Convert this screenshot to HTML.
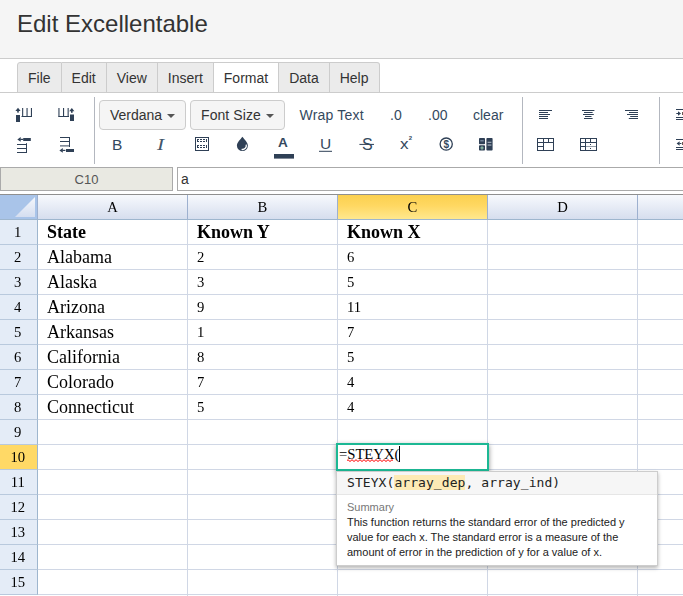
<!DOCTYPE html>
<html><head><meta charset="utf-8">
<style>
*{box-sizing:border-box;margin:0;padding:0}
html,body{width:683px;height:596px;overflow:hidden;background:#fff;font-family:"Liberation Sans",sans-serif;color:#333}
.abs{position:absolute}
#hdr{left:0;top:0;width:683px;height:59px;background:#f5f5f5;border-bottom:1px solid #ccc}
#title{left:17px;top:10px;font-size:24px;line-height:28px;color:#333;white-space:nowrap}
#tabs{left:17px;top:62px;height:31px;display:flex;font-size:14px}
.tab{height:31px;border:1px solid #ccc;border-left:none;background:#ebebeb;line-height:28px;padding:1px 10px 0;color:#333;white-space:nowrap}
.tab:first-child{border-left:1px solid #ccc;border-top-left-radius:3px}
.tab:last-child{border-top-right-radius:3px}
.tab.act{background:#fff;border-bottom-color:#fff}
#tabline{left:0;top:92px;width:683px;height:1px;background:#ccc}
.vsep{top:97px;width:1px;height:67px;background:#b3b7bf}
.btn{top:100px;height:30px;border:1px solid #ccc;border-radius:4px;background:#f5f5f5;font-size:14px;line-height:28px;color:#333;white-space:nowrap;padding-left:10px}
.caret{display:inline-block;width:0;height:0;border-left:4px solid transparent;border-right:4px solid transparent;border-top:4px solid #555;vertical-align:middle;margin-left:5px}
.tt{font-size:14px;line-height:16px;color:#34495e;white-space:nowrap}
#cellname{left:0;top:167px;width:173px;height:24px;background:#e9e9e2;border:1px solid #aaa;font-size:13px;line-height:24px;text-align:center;color:#555}
#finput{left:177px;top:167px;width:520px;height:24px;background:#fff;border:1px solid #aaa;font-size:14px;line-height:22px;padding-left:3px;color:#333}
#grid{left:0;top:194px;width:683px;height:402px;border-top:1px solid #8f8f8f;font-family:"Liberation Serif",serif;color:#000}
.ch{top:0;height:25px;border-right:1px solid #9db0cf;border-bottom:1px solid #9eb6ce;background:linear-gradient(#f7f9fd,#d6deee);font-size:14.67px;line-height:24px;text-align:center}
.ch.sel{background:linear-gradient(#fbd04f,#ffd862 45%,#ffe88e)}
.rh{left:0;width:38px;height:25px;border-right:1px solid #9eb6ce;border-bottom:1px solid #b8c9dd;background:#e4ecf7;font-size:14.67px;line-height:24px;text-align:center;padding-right:1.5px}
.rh.sel{background:#ffd966}
.hl{left:38px;width:645px;height:1px;background:#d0d7e5}
.vl{top:25px;width:1px;height:380px;background:#d0d7e5}
#gtext{will-change:transform;left:0;top:195px;width:683px;height:401px;font-family:"Liberation Serif",serif;color:#000;pointer-events:none}
.ht{height:24px;font-size:14.67px;line-height:24px;text-align:center}
.c{white-space:nowrap;line-height:24px}
.a{font-size:18px}
.n{font-size:14.67px;margin-top:0px}
.ic{color:#34495e;line-height:18px;white-space:nowrap}
#editor{left:336px;top:443px;width:153px;height:28px;border:2px solid #1cb894;background:#fff;font-family:"Liberation Serif",serif;font-size:14.67px;line-height:19px;color:#000;padding-left:1px;white-space:nowrap;box-shadow:0 2px 5px rgba(0,0,0,.45)}
#sp{position:relative}
#wav{position:absolute;left:0;top:12.3px}
#cur{display:inline-block;width:1px;height:16px;background:#000;vertical-align:-3px;margin-left:0}
#tip{left:336px;top:471px;width:322px;height:95px;background:#fff;border:1px solid #cdcdcd;box-shadow:0 2px 4px rgba(0,0,0,.3)}
#tiphead{height:23px;background:#f6f6f6;border-bottom:1px solid #e6e6e6;font-family:"DejaVu Sans Mono","Liberation Mono",monospace;font-size:13px;line-height:22px;padding-left:10px;color:#222;white-space:nowrap;letter-spacing:.07px}
.hlarg{background:#fdeab5}
#tipbody{padding:5px 0 0 10px;font-size:11px;color:#222;line-height:15px;white-space:nowrap}
.sum{color:#777;line-height:14px}
.desc{margin-top:1px}

</style></head><body>
<div id="hdr" class="abs"></div>
<div id="title" class="abs">Edit Excellentable</div>
<div id="tabs" class="abs"><div class="tab">File</div><div class="tab">Edit</div><div class="tab">View</div><div class="tab">Insert</div><div class="tab act">Format</div><div class="tab">Data</div><div class="tab">Help</div></div>
<div id="tabline" class="abs"></div>
<div class="abs vsep" style="left:94px"></div>
<div class="abs vsep" style="left:522px"></div>
<div class="abs vsep" style="left:659px"></div>
<div class="abs btn" style="left:99px;width:87px">Verdana<span class="caret"></span></div>
<div class="abs btn" style="left:190px;width:95px;letter-spacing:.08px">Font Size<span class="caret" style="margin-left:5.5px"></span></div>
<div class="abs tt" style="left:299.5px;top:107px;letter-spacing:.2px">Wrap Text</div>
<div class="abs tt" style="left:390px;top:107px">.0</div>
<div class="abs tt" style="left:428px;top:107px">.00</div>
<div class="abs tt" style="left:473px;top:107px">clear</div>
<!--ICONS-->
<svg class="abs" style="left:0;top:0" width="683" height="170" viewBox="0 0 683 170" fill="#2f4056">
<polygon points="18,107.8 20.6,111.0 15.4,111.0"/><rect x="17.2" y="110.8" width="1.6" height="1.8"/>
<rect x="16" y="115" width="4" height="7"/>
<rect x="22.1" y="108" width="1.1" height="9"/>
<rect x="26.5" y="108" width="1.1" height="9"/>
<rect x="30.9" y="108" width="1.1" height="9"/>
<rect x="21.5" y="116" width="10.5" height="1"/>
<rect x="58.4" y="108" width="1.1" height="9"/>
<rect x="63" y="108" width="1.1" height="9"/>
<rect x="67.6" y="108" width="1.1" height="9"/>
<rect x="58.5" y="116" width="10.5" height="1"/>
<polygon points="71.8,108 74.39999999999999,111.2 69.2,111.2"/><rect x="71.0" y="111" width="1.6" height="1.8"/>
<rect x="70" y="114.5" width="4" height="6.5"/>
<polygon points="17.3,139.4 20.7,137.0 20.7,141.8"/><rect x="20.3" y="138.8" width="3" height="1.2"/>
<rect x="23.2" y="138" width="7.6" height="3"/>
<rect x="17" y="144" width="9.5" height="1"/>
<rect x="17" y="148" width="9.5" height="1"/>
<rect x="17" y="152" width="9.5" height="1"/>
<rect x="26" y="143.2" width="1" height="9.8"/>
<rect x="60" y="137" width="9.5" height="1"/>
<rect x="60" y="141" width="9.5" height="1"/>
<rect x="60" y="145.4" width="9.5" height="1"/>
<rect x="69" y="137" width="1" height="10"/>
<polygon points="59.4,150.4 62.8,148.0 62.8,152.8"/><rect x="62.4" y="149.8" width="3" height="1.2"/>
<rect x="66" y="149" width="8" height="3"/>
<rect x="195.5" y="137.5" width="13" height="13" fill="none" stroke="#2f4056" stroke-width="1"/>
<path d="M197 139.5H207" fill="none" stroke="#2f4056" stroke-width="1" stroke-dasharray="2 1"/>
<path d="M197 141.5H207" fill="none" stroke="#2f4056" stroke-width="1" stroke-dasharray="2 1"/>
<path d="M197 145.5H207" fill="none" stroke="#2f4056" stroke-width="1" stroke-dasharray="2 1"/>
<path d="M197 147.5H207" fill="none" stroke="#2f4056" stroke-width="1" stroke-dasharray="2 1"/>
<rect x="197" y="140" width="1" height="1"/><rect x="206" y="140" width="1" height="1"/>
<rect x="197" y="146" width="1" height="1"/><rect x="206" y="146" width="1" height="1"/>
<path d="M242.4 136.8 C244.5 139.6 247.9 142.6 247.9 145.6 A5.5 5.5 0 0 1 236.9 145.6 C236.9 142.6 240.3 139.6 242.4 136.8 Z"/>
<path d="M246.2 144.6 A3.9 3.9 0 0 1 241.6 149.4" fill="none" stroke="#fff" stroke-width="1.3"/>
<rect x="274" y="154" width="20" height="4.6"/>
<rect x="319" y="150.8" width="13" height="1"/>
<rect x="359.4" y="143.9" width="14.6" height="1"/>
<circle cx="446.2" cy="144.1" r="6.1" fill="none" stroke="#2f4056" stroke-width="1.3"/>
<rect x="479" y="138" width="6" height="6.2" rx="0.8"/><rect x="479" y="145.2" width="6" height="5.4" rx="0.8"/><rect x="486.4" y="138" width="6.2" height="12.6" rx="0.8"/>
<rect x="480.3" y="140.4" width="3.4" height="0.9" fill="#9fb0c3"/><rect x="480.3" y="147.5" width="3.4" height="0.9" fill="#9fd8b8"/><rect x="481.55" y="146.2" width="0.9" height="3.5" fill="#9fd8b8"/>
<rect x="487.6" y="141.8" width="3.8" height="0.9" fill="#c8d0da"/><rect x="487.6" y="144.6" width="3.8" height="0.9" fill="#c8d0da"/>
<rect x="539" y="110" width="13" height="1"/>
<rect x="539" y="112" width="9" height="1"/>
<rect x="539" y="114" width="11" height="1"/>
<rect x="539" y="116" width="9" height="1"/>
<rect x="539" y="118" width="9" height="1"/>
<rect x="582" y="110" width="12.4" height="1"/>
<rect x="584" y="112" width="8.6" height="1"/>
<rect x="583" y="114" width="10.8" height="1"/>
<rect x="585" y="116" width="6.5" height="1"/>
<rect x="584" y="118" width="8.6" height="1"/>
<rect x="625" y="110" width="13.0" height="1"/>
<rect x="629" y="112" width="9.0" height="1"/>
<rect x="627" y="114" width="11.0" height="1"/>
<rect x="630.2" y="116" width="7.8" height="1"/>
<rect x="628.8" y="118" width="9.2" height="1"/>
<g fill="none" stroke="#2f4056" stroke-width="1"><rect x="537.5" y="138.5" width="16" height="12"/><path d="M537.5 142.5H553.5M543.5 138.5V150.5M548.5 138.5V142.5M537.5 146.5H543.5"/></g>
<g fill="none" stroke="#2f4056" stroke-width="1"><rect x="580.5" y="138.5" width="16" height="12"/><path d="M580.5 142.5H596.5M580.5 146.5H586.5M585.5 138.5V150.5M590.5 138.5V142.5"/><path d="M587.5 146.5H596.5" stroke-dasharray="1 1"/><path d="M590.5 144V145M590.5 148V149"/></g>
<rect x="676" y="109" width="8" height="1"/><rect x="676" y="117" width="8" height="1"/><rect x="676" y="119" width="8" height="1"/>
<rect x="676" y="139" width="8" height="1"/><rect x="676" y="147" width="8" height="1"/><rect x="676" y="149" width="8" height="1"/>
<polygon points="681,113.5 678,111.3 678,115.7"/><rect x="676.3" y="113" width="2" height="1"/><rect x="682" y="112" width="1" height="3" fill="#6b5a55"/>
<polygon points="676.6,143.5 679.6,141.3 679.6,145.7"/><rect x="679.4" y="143" width="2" height="1"/><rect x="682" y="142" width="1" height="3" fill="#6b5a55"/>
</svg>
<div class="abs ic" style="left:112px;top:136px;font-size:15.5px">B</div>
<div class="abs ic" style="left:157px;top:136px;font-size:17px;font-family:'Liberation Serif',serif;font-style:italic;transform:scaleX(1.25);transform-origin:left;color:#44566b">I</div>
<div class="abs ic" style="left:278px;top:134px;font-size:13.6px;font-weight:bold">A</div>
<div class="abs ic" style="left:320px;top:135px;font-size:15.5px">U</div>
<div class="abs ic" style="left:362px;top:136px;font-size:16px">S</div>
<div class="abs ic" style="left:400px;top:134.5px;font-size:15.5px;transform:scaleX(1.1);transform-origin:left">x</div>
<div class="abs ic" style="left:408.8px;top:133px;font-size:6px;line-height:10px;font-weight:bold">2</div>
<div class="abs ic" style="left:443.4px;top:138.6px;font-size:10px;line-height:11px;font-weight:bold">$</div>
<!--/ICONS-->
<div id="cellname" class="abs">C10</div>
<div id="finput" class="abs">a</div>
<div id="grid" class="abs">
<!--GRID-->
<div class="abs ch" style="left:0;width:38px;background:#a9c4e9"><svg class="abs" style="left:0;top:0" width="38" height="24"><defs><linearGradient id="tg" x1="0" y1="0" x2="0" y2="1"><stop offset="0" stop-color="#f4f7fc"/><stop offset="1" stop-color="#d5def0"/></linearGradient></defs><polygon points="35,2 35,22 15,22" fill="url(#tg)"/></svg></div>
<div class="abs ch" style="left:38px;width:150px"></div>
<div class="abs ch" style="left:188px;width:150px"></div>
<div class="abs ch sel" style="left:338px;width:150px"></div>
<div class="abs ch" style="left:488px;width:150px"></div>
<div class="abs ch" style="left:638px;width:60px"></div>
<div class="abs rh" style="top:25px"></div>
<div class="abs hl" style="top:49px"></div>
<div class="abs rh" style="top:50px"></div>
<div class="abs hl" style="top:74px"></div>
<div class="abs rh" style="top:75px"></div>
<div class="abs hl" style="top:99px"></div>
<div class="abs rh" style="top:100px"></div>
<div class="abs hl" style="top:124px"></div>
<div class="abs rh" style="top:125px"></div>
<div class="abs hl" style="top:149px"></div>
<div class="abs rh" style="top:150px"></div>
<div class="abs hl" style="top:174px"></div>
<div class="abs rh" style="top:175px"></div>
<div class="abs hl" style="top:199px"></div>
<div class="abs rh" style="top:200px"></div>
<div class="abs hl" style="top:224px"></div>
<div class="abs rh" style="top:225px"></div>
<div class="abs hl" style="top:249px"></div>
<div class="abs rh sel" style="top:250px"></div>
<div class="abs hl" style="top:274px"></div>
<div class="abs rh" style="top:275px"></div>
<div class="abs hl" style="top:299px"></div>
<div class="abs rh" style="top:300px"></div>
<div class="abs hl" style="top:324px"></div>
<div class="abs rh" style="top:325px"></div>
<div class="abs hl" style="top:349px"></div>
<div class="abs rh" style="top:350px"></div>
<div class="abs hl" style="top:374px"></div>
<div class="abs rh" style="top:375px"></div>
<div class="abs hl" style="top:399px"></div>
<div class="abs vl" style="left:187px"></div>
<div class="abs vl" style="left:337px"></div>
<div class="abs vl" style="left:487px"></div>
<div class="abs vl" style="left:637px"></div>
<div class="abs vl" style="left:697px"></div>
<!--/GRID-->
</div>
<!--EDITOR-->
<div class="abs" id="editor">=<span id="sp">STEYX<svg id="wav" width="46" height="4" viewBox="0 0 46 4"><path d="M0 2.6 q1 -1.8 2 0 t2 0 t2 0 t2 0 t2 0 t2 0 t2 0 t2 0 t2 0 t2 0 t2 0 t2 0 t2 0 t2 0 t2 0 t2 0 t2 0 t2 0 t2 0 t2 0 t2 0 t2 0 t2 0" fill="none" stroke="#f00" stroke-width="1"/></svg></span>(<span id="cur"></span></div>
<div class="abs" id="tip">
<div id="tiphead">STEYX(<span class="hlarg">array_dep</span>, array_ind)</div>
<div id="tipbody"><div class="sum">Summary</div><div class="desc">This function returns the standard error of the predicted y<br>value for each x. The standard error is a measure of the<br>amount of error in the prediction of y for a value of x.</div></div>
</div>
<!--/EDITOR-->
<!--GTEXT-->
<div id="gtext" class="abs">
<div class="abs ht" style="left:38px;width:149px;top:0">A</div>
<div class="abs ht" style="left:188px;width:149px;top:0">B</div>
<div class="abs ht" style="left:338px;width:149px;top:0">C</div>
<div class="abs ht" style="left:488px;width:149px;top:0">D</div>
<div class="abs ht" style="left:0;width:35.5px;top:25px">1</div>
<div class="abs ht" style="left:0;width:35.5px;top:50px">2</div>
<div class="abs ht" style="left:0;width:35.5px;top:75px">3</div>
<div class="abs ht" style="left:0;width:35.5px;top:100px">4</div>
<div class="abs ht" style="left:0;width:35.5px;top:125px">5</div>
<div class="abs ht" style="left:0;width:35.5px;top:150px">6</div>
<div class="abs ht" style="left:0;width:35.5px;top:175px">7</div>
<div class="abs ht" style="left:0;width:35.5px;top:200px">8</div>
<div class="abs ht" style="left:0;width:35.5px;top:225px">9</div>
<div class="abs ht" style="left:0;width:35.5px;top:250px">10</div>
<div class="abs ht" style="left:0;width:35.5px;top:275px">11</div>
<div class="abs ht" style="left:0;width:35.5px;top:300px">12</div>
<div class="abs ht" style="left:0;width:35.5px;top:325px">13</div>
<div class="abs ht" style="left:0;width:35.5px;top:350px">14</div>
<div class="abs ht" style="left:0;width:35.5px;top:375px">15</div>
<div class="abs c a" style="left:47px;top:25px;font-weight:bold">State</div>
<div class="abs c a" style="left:197px;top:25px;font-weight:bold">Known Y</div>
<div class="abs c a" style="left:347px;top:25px;font-weight:bold">Known X</div>
<div class="abs c a" style="left:47px;top:50px">Alabama</div>
<div class="abs c n" style="left:197px;top:50px">2</div>
<div class="abs c n" style="left:347px;top:50px">6</div>
<div class="abs c a" style="left:47px;top:75px">Alaska</div>
<div class="abs c n" style="left:197px;top:75px">3</div>
<div class="abs c n" style="left:347px;top:75px">5</div>
<div class="abs c a" style="left:47px;top:100px">Arizona</div>
<div class="abs c n" style="left:197px;top:100px">9</div>
<div class="abs c n" style="left:347px;top:100px">11</div>
<div class="abs c a" style="left:47px;top:125px">Arkansas</div>
<div class="abs c n" style="left:197px;top:125px">1</div>
<div class="abs c n" style="left:347px;top:125px">7</div>
<div class="abs c a" style="left:47px;top:150px">California</div>
<div class="abs c n" style="left:197px;top:150px">8</div>
<div class="abs c n" style="left:347px;top:150px">5</div>
<div class="abs c a" style="left:47px;top:175px">Colorado</div>
<div class="abs c n" style="left:197px;top:175px">7</div>
<div class="abs c n" style="left:347px;top:175px">4</div>
<div class="abs c a" style="left:47px;top:200px">Connecticut</div>
<div class="abs c n" style="left:197px;top:200px">5</div>
<div class="abs c n" style="left:347px;top:200px">4</div>
</div>
<!--/GTEXT-->
</body></html>
